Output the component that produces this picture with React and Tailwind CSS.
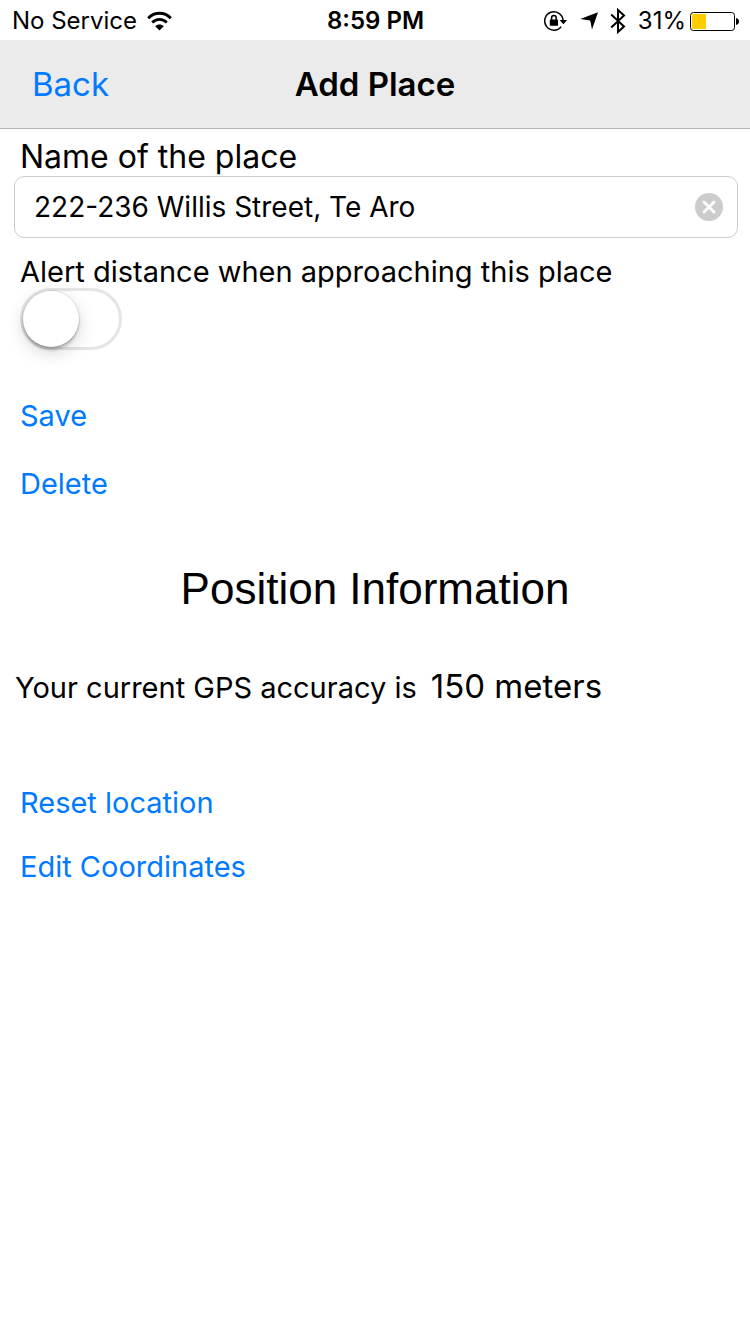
import { useState } from "react";

function WifiIcon() {
  return (
    <svg className="h-[20px] w-[25px]" viewBox="0 0 25 20" fill="none" stroke="#000" aria-hidden="true">
      <path d="M1.2 7.2C7.6 0.6 17.4 0.6 23.8 7.2" strokeWidth="3" />
      <path d="M5.2 11.5C9.4 7.3 15.6 7.3 19.8 11.5" strokeWidth="2.8" />
      <path d="M12.5 19.4L8.2 15.2C10.6 12.8 14.4 12.8 16.8 15.2Z" fill="#000" stroke="none" />
    </svg>
  );
}

function RotationLockIcon() {
  return (
    <svg className="h-[22px] w-[24px]" viewBox="0 0 24 22" fill="none" stroke="#000" aria-hidden="true">
      <path d="M17.2 16.6A9.2 9.2 0 1 1 19.1 10.4" strokeWidth="1.5" />
      <path d="M15.6 10H23.2L19.4 14.2Z" fill="#000" stroke="none" />
      <rect x="5.8" y="9.4" width="8.2" height="6.4" rx="0.6" fill="#000" stroke="none" />
      <path d="M7.6 10V7.9A2.3 2.3 0 0 1 12.2 7.9V10" strokeWidth="1.5" />
    </svg>
  );
}

function LocationIcon() {
  return (
    <svg className="h-[18px] w-[18px]" viewBox="0 0 18 18" aria-hidden="true">
      <path d="M18 0.2L12 17.6L10.2 8.6L0.2 6.9Z" fill="#000" />
    </svg>
  );
}

function BluetoothIcon() {
  return (
    <svg className="h-[26px] w-[16px]" viewBox="0 0 16 26" fill="none" stroke="#000" strokeWidth="2" aria-hidden="true">
      <path d="M1.2 6.6L14 18.6L8 24V2L14 7.4L1.2 19.4" />
    </svg>
  );
}

function BatteryIcon() {
  return (
    <svg className="h-[20px] w-[49px]" viewBox="0 0 49 20" aria-hidden="true">
      <rect x="0.5" y="1.5" width="44" height="18" rx="3" fill="#fff" stroke="#000" />
      <path d="M3.5 3H16V18H3.5Q2 18 2 16.5V4.5Q2 3 3.5 3Z" fill="#fc0" />
      <path d="M46 7Q49 7.6 49 10.5Q49 13.4 46 14Z" fill="#000" />
    </svg>
  );
}

function StatusBar() {
  return (
    <div className="grid h-10 grid-cols-[1fr_auto_1fr] items-center pr-[11px] pl-3 pt-px text-[24px] leading-8">
      <div className="flex items-center gap-[10px]">
        <span>No Service</span>
        <WifiIcon />
      </div>
      <span className="font-semibold">8:59 PM</span>
      <div className="flex items-center justify-end">
        <RotationLockIcon />
        <span className="ml-3 flex"><LocationIcon /></span>
        <span className="ml-3 flex"><BluetoothIcon /></span>
        <span className="ml-3">31%</span>
        <span className="ml-1 flex"><BatteryIcon /></span>
      </div>
    </div>
  );
}

export default function App() {
  const [name, setName] = useState("222-236 Willis Street, Te Aro");
  return (
    <div className="min-h-screen bg-white font-['Inter','Liberation_Sans',sans-serif] text-black">
      <StatusBar />
      <header className="grid h-[89px] grid-cols-[1fr_auto_1fr] items-center border-b border-[#b2b2b2] bg-[#ebebeb] px-8 text-[33px] leading-10">
        <button type="button" className="justify-self-start text-[#007aff]">Back</button>
        <h1 className="font-semibold">Add Place</h1>
      </header>
      <main>
        <form onSubmit={(e) => e.preventDefault()}>
          <label htmlFor="place-name" className="block px-5 pt-2 text-[32px] leading-[39px]">
            Name of the place
          </label>
          <div className="mr-3 ml-[14px] flex h-[62px] items-center rounded-[10px] border border-[#ccc] pr-[14px] pl-[19px]">
            <input
              id="place-name"
              type="text"
              value={name}
              onChange={(e) => setName(e.target.value)}
              className="min-w-0 flex-1 bg-transparent text-[28px] leading-8 outline-none"
            />
            <button type="button" aria-label="Clear text" onClick={() => setName("")}>
              <svg className="block h-7 w-7" viewBox="0 0 28 28" aria-hidden="true">
                <circle cx="14" cy="14" r="14" fill="#ccc" />
                <path d="M9 9L19 19M19 9L9 19" stroke="#fff" strokeWidth="2.8" strokeLinecap="round" />
              </svg>
            </button>
          </div>
          <div className="px-5 pt-[18px]">
            <label htmlFor="alert-distance" className="block text-[29px] leading-8">
              Alert distance when approaching this place
            </label>
            <input
              id="alert-distance"
              type="checkbox"
              role="switch"
              className="block h-[62px] w-[102px] appearance-none rounded-full border-[3px] border-[#e5e5e5] bg-white before:block before:h-14 before:w-14 before:rounded-full before:bg-white before:shadow-[0_0_1px_1px_rgba(0,0,0,0.08),0_3px_3px_rgba(0,0,0,0.22),0_6px_18px_rgba(0,0,0,0.16)] before:content-[''] checked:border-[#4cd964] checked:bg-[#4cd964] checked:before:ml-10"
            />
          </div>
          <div className="flex flex-col items-start px-5 pt-8 text-[29px] leading-8 text-[#007aff]">
            <button type="submit" className="h-[68px]">Save</button>
            <button type="button" className="h-[68px]">Delete</button>
          </div>
        </form>
        <section>
          <h2 className="pt-[46px] text-center font-['Liberation_Sans',sans-serif] text-[44px] leading-[50px]">
            Position Information
          </h2>
          <p className="flex items-baseline gap-[14px] px-[15px] pt-[52px] text-[29px] leading-10">
            <span>Your current GPS accuracy is</span>
            <span className="text-[33px]">150 meters</span>
          </p>
          <div className="flex flex-col items-start px-5 pt-[63px] text-[29px] leading-8 text-[#007aff]">
            <button type="button" className="h-16">Reset location</button>
            <button type="button" className="h-16">Edit Coordinates</button>
          </div>
        </section>
      </main>
    </div>
  );
}
